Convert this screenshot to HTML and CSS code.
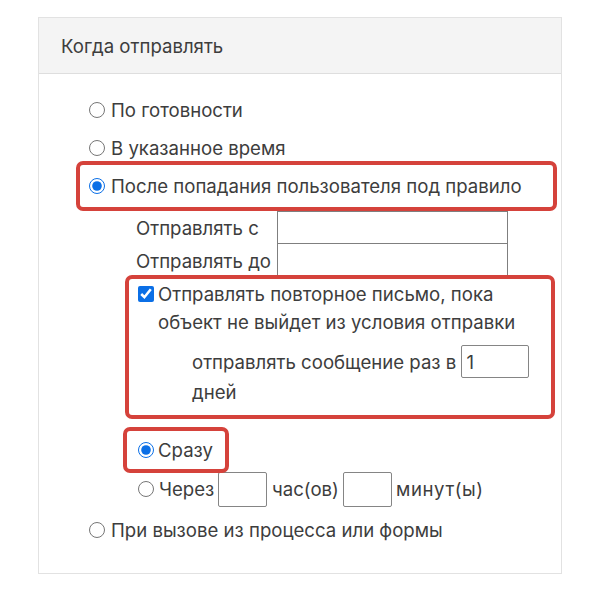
FILE: index.html
```html
<!DOCTYPE html>
<html lang="ru">
<head>
<meta charset="utf-8">
<title>Когда отправлять</title>
<link rel="stylesheet" href="styles.css">
</head>
<body>
<div class="panel">
  <div class="panel-head">Когда отправлять</div>
  <div class="panel-body">
    <label class="opt"><input class="radio" type="radio" name="when"><span>По готовности</span></label>
    <label class="opt"><input class="radio" type="radio" name="when"><span>В указанное время</span></label>
    <div class="hl hl-main">
      <label class="opt"><input class="radio" type="radio" name="when" checked><span>После попадания пользователя под правило</span></label>
    </div>
    <div class="sub">
      <div class="field"><span class="flabel">Отправлять с</span><input class="tinput" type="text"></div>
      <div class="field"><span class="flabel">Отправлять до</span><input class="tinput" type="text"></div>
      <div class="hl hl-repeat">
        <label class="check"><input class="cbox" type="checkbox" checked><span>Отправлять повторное письмо, пока объект не выйдет из условия отправки</span></label>
        <div class="period">отправлять сообщение раз в <input class="small small-num" type="text" value="1"> дней</div>
      </div>
      <div class="hl hl-now">
        <label class="opt"><input class="radio" type="radio" name="delay" checked><span>Сразу</span></label>
      </div>
      <div class="opt opt-delay">
        <input class="radio" type="radio" name="delay">
        <span class="d-through">Через</span>
        <input class="small" type="text">
        <span class="d-hours">час(ов)</span>
        <input class="small" type="text">
        <span class="d-mins">минут(ы)</span>
      </div>
    </div>
    <label class="opt opt-last"><input class="radio" type="radio" name="when"><span>При вызове из процесса или формы</span></label>
  </div>
</div>
</body>
</html>
```
FILE: styles.css
```css
* { box-sizing: border-box; }

body {
  margin: 0;
  background: #ffffff;
  font-family: Inter, "Noto Sans", sans-serif;
  font-size: 18.6px;
  color: #3d3d3d;
}

.panel {
  margin: 17px 0 0 38px;
  width: 524px;
  height: 557px;
  border: 1px solid #e2e2e2;
}

.panel-head {
  height: 56px;
  padding-left: 22px;
  display: flex;
  align-items: center;
  background: #f4f4f4;
  border-bottom: 1px solid #dedede;
}

.panel-body {
  padding: 17px 0 0 50px;
}

.opt {
  display: flex;
  align-items: center;
  height: 38px;
  gap: 6px;
}

.radio {
  margin: 0;
  width: 16px;
  height: 16px;
  accent-color: #0b6fe6;
  flex: none;
}

.hl {
  position: relative;
  z-index: 1;
  border: 4px solid #d5423b;
  border-radius: 7px;
}

.hl-main {
  width: 481px;
  margin: -6px 0 -6px -13px;
  padding: 2px 0 2px 9px;
}

.sub {
  margin: 6px 0 0 47px;
}

.field {
  display: flex;
  align-items: center;
  height: 33px;
}

.flabel {
  width: 141px;
}

.tinput {
  width: 231px;
  height: 34px;
  margin: 0;
  border: 1px solid #7f7f7f;
  border-radius: 0;
  background: #fff;
  font: inherit;
  padding: 0 4px;
}

.field + .field .tinput {
  margin-top: -1px;
}

.hl-repeat {
  width: 430px;
  margin: -2px 0 0 -11px;
  padding: 1px 0 8px 9px;
}

.check {
  display: flex;
  align-items: flex-start;
  gap: 4px;
  line-height: 28px;
}

.cbox {
  margin: 6px 0 0;
  width: 16px;
  height: 16px;
  accent-color: #0b6fe6;
  flex: none;
}

.period {
  margin: 9px 0 0 54px;
  line-height: 29px;
}

.small {
  width: 49px;
  height: 35px;
  margin: 0;
  padding: 0 4px;
  border: 1px solid #858585;
  border-radius: 2px;
  background: #fff;
  font: inherit;
  color: #3d3d3d;
}

.small-num {
  width: 68px;
  height: 33px;
}

.hl-now {
  width: 106px;
  margin: 8px 0 0 -13px;
  padding: 0 0 0 11px;
}

.hl-now .opt { gap: 4px; }

.opt-delay {
  margin-top: -2px;
  height: 36px;
  gap: 0;
  padding-left: 2px;
}

.opt-delay .radio { margin-right: 5px; }
.d-through { width: 59px; }
.d-hours { width: 71px; margin-left: 5px; }
.d-mins { margin-left: 4px; letter-spacing: 0.6px; }

.opt-last {
  margin-top: 4px;
}
```
